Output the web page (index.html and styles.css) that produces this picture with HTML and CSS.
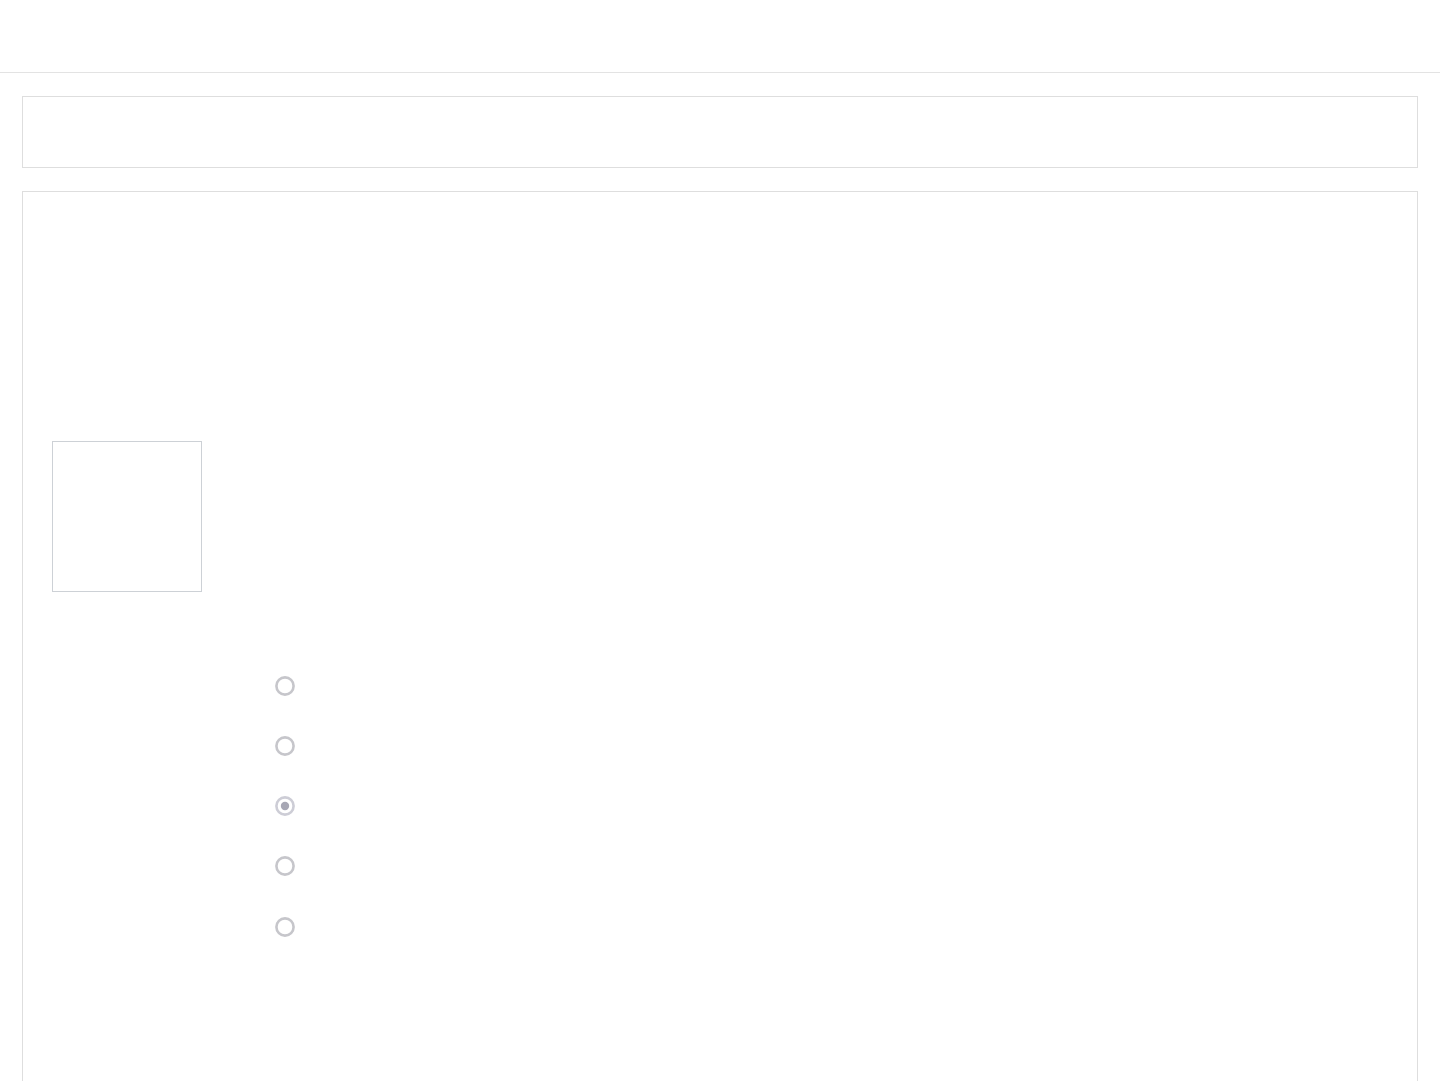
FILE: index.html
```html
<!DOCTYPE html>
<html lang="en">
<head>
<meta charset="utf-8">
<title>Page</title>
<link rel="stylesheet" href="styles.css">
</head>
<body>
<header class="topbar"></header>
<main class="main">
  <section class="panel panel-top"></section>
  <section class="panel panel-body">
    <div class="thumb"></div>
    <ul class="options">
      <li class="option"><svg class="radio" viewBox="0 0 20 20"><circle cx="10" cy="10" r="8.6" class="ring"/></svg></li>
      <li class="option"><svg class="radio" viewBox="0 0 20 20"><circle cx="10" cy="10" r="8.6" class="ring"/></svg></li>
      <li class="option"><svg class="radio" viewBox="0 0 20 20"><circle cx="10" cy="10" r="8.6" class="ring ring-checked"/><circle cx="10" cy="10" r="4.2" class="dot"/></svg></li>
      <li class="option"><svg class="radio" viewBox="0 0 20 20"><circle cx="10" cy="10" r="8.6" class="ring"/></svg></li>
      <li class="option"><svg class="radio" viewBox="0 0 20 20"><circle cx="10" cy="10" r="8.6" class="ring"/></svg></li>
    </ul>
  </section>
</main>
</body>
</html>
```

FILE: styles.css
```css
html, body {
  margin: 0;
  padding: 0;
  background: #ffffff;
  font-family: "Liberation Sans", Arial, sans-serif;
  overflow: hidden;
}
.topbar {
  box-sizing: border-box;
  height: 73px;
  border-bottom: 1px solid #e3e3e3;
}
.main {
  padding: 23px 22px 0 22px;
  display: flex;
  flex-direction: column;
  gap: 23px;
}
.panel {
  border: 1px solid #dedede;
  box-sizing: border-box;
  background: #fff;
}
.panel-top {
  height: 72px;
}
.panel-body {
  min-height: 1000px;
  padding: 249px 29px 0 29px;
}
.thumb {
  width: 150px;
  height: 151px;
  box-sizing: border-box;
  border: 1px solid #cdd1d6;
}
.options {
  list-style: none;
  margin: 63.5px 0 0 0;
  padding: 0 0 0 222.5px;
}
.option {
  height: 60.25px;
  display: flex;
  align-items: center;
}
.radio {
  width: 20px;
  height: 20px;
  display: block;
}
.ring {
  fill: none;
  stroke: #c6c6cb;
  stroke-width: 2.6;
}
.ring-checked {
  stroke: #cdcdd6;
}
.dot {
  fill: #a7a7b4;
}
```
